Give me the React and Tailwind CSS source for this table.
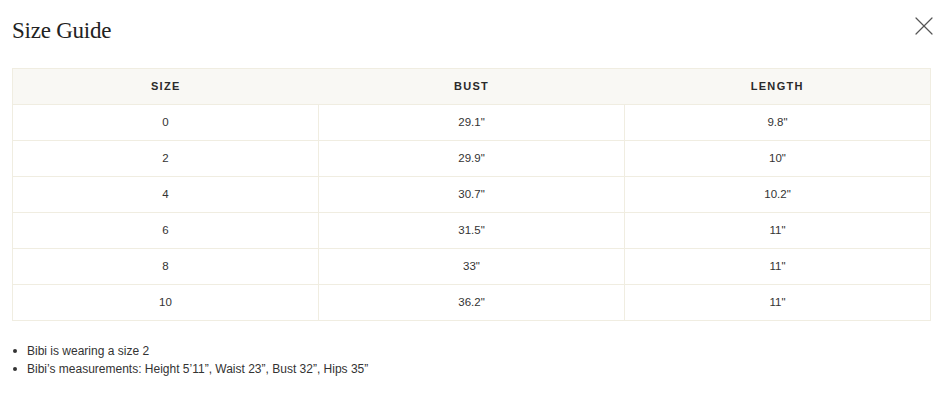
import { X } from "lucide-react";

const rows = [
  ["0", "29.1\"", "9.8\""],
  ["2", "29.9\"", "10\""],
  ["4", "30.7\"", "10.2\""],
  ["6", "31.5\"", "11\""],
  ["8", "33\"", "11\""],
  ["10", "36.2\"", "11\""],
];

const notes = [
  "Bibi is wearing a size 2",
  "Bibi’s measurements: Height 5’11”, Waist 23”, Bust 32”, Hips 35”",
];

export default function App() {
  return (
    <div className="w-[948px] h-[408px] bg-white px-3 pt-[17px] font-['Liberation_Sans',Arial,sans-serif] text-[#333]">
      <div className="flex h-[28px] items-start justify-between">
        <h2 className="font-['Liberation_Serif',serif] text-[23px] leading-[28px] text-[#222] tracking-[-0.01em]">
          Size Guide
        </h2>
        <button className="mt-[-7px] mr-[-4px] text-[#555]">
          <X className="h-[32px] w-[32px]" strokeWidth={0.9} />
        </button>
      </div>

      <table className="mt-[23px] w-[919px] table-fixed border-collapse border border-[#f0ede1] text-center">
        <thead>
          <tr className="h-[36px] bg-[#f9f8f4]">
            <th className="text-[11px] font-semibold tracking-[0.12em] text-[#2a2a2a]">SIZE</th>
            <th className="text-[11px] font-semibold tracking-[0.12em] text-[#2a2a2a]">BUST</th>
            <th className="text-[11px] font-semibold tracking-[0.12em] text-[#2a2a2a]">LENGTH</th>
          </tr>
        </thead>
        <tbody>
          {rows.map((r, i) => (
            <tr key={i} className="h-[36px]">
              {r.map((c, j) => (
                <td key={j} className="border border-[#f0ede1] text-[11.5px]">
                  {c}
                </td>
              ))}
            </tr>
          ))}
        </tbody>
      </table>

      <ul className="mt-[21px] text-[12px] leading-[18px]">
        {notes.map((n, i) => (
          <li key={i} className="flex items-center">
            <span className="ml-[1px] mr-[10px] h-[4px] w-[4px] rounded-full bg-[#333]" />
            {n}
          </li>
        ))}
      </ul>
    </div>
  );
}
